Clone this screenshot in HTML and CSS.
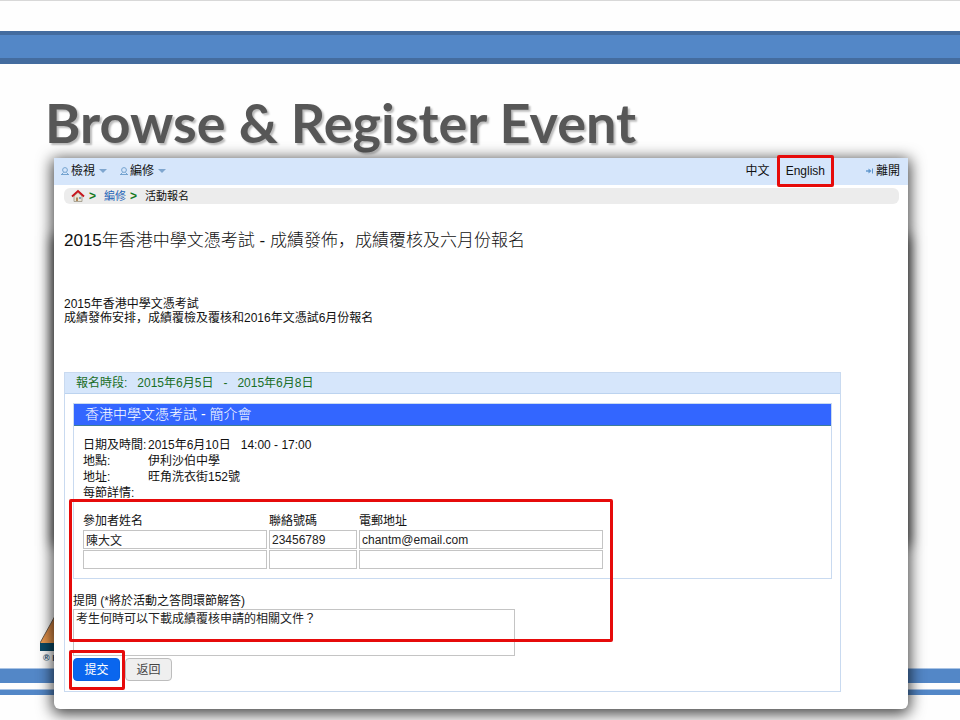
FILE: index.html
```html
<!DOCTYPE html>
<html lang="en">
<head>
    <meta charset="UTF-8">
    <meta name="viewport" content="width=device-width, initial-scale=1.0">
    <title>Browse &amp; Register Event</title>
    <link rel="stylesheet" href="styles.css">
</head>
<body>
    <div class="top-band"></div>
    <h1>Browse &amp; Register Event</h1>

    <div class="stage">
        <div class="slide-footer">
            <div class="logo">
                <svg width="60" height="36" viewBox="0 0 60 36" aria-hidden="true">
                    <defs>
                        <linearGradient id="sail" x1="0" y1="0" x2="0" y2="1">
                            <stop offset="0" stop-color="#c9783c"/>
                            <stop offset="1" stop-color="#f09c50"/>
                        </linearGradient>
                    </defs>
                    <path d="M0 27 L15 0 L45 0 L60 27 Z" fill="url(#sail)"/>
                    <path d="M0 27 L15 0" stroke="#6b5a4a" stroke-width="1"/>
                    <rect x="0" y="27" width="60" height="8" fill="#0c4a66"/>
                </svg>
                <span>® H</span>
            </div>
            <div class="band-thick"></div>
            <div class="band-thin"></div>
        </div>

        <div class="window">
            <nav class="toolbar">
                <a href="#">
                    <svg class="user" width="10" height="10" viewBox="0 0 10 10" aria-hidden="true"><circle cx="5" cy="4" r="2.4"/><path d="M1 8.5h8M2 8l1.600-1.600M8 8L6.400 6.400"/></svg>檢視<span class="caret"></span>
                </a>
                <a href="#">
                    <svg class="user" width="10" height="10" viewBox="0 0 10 10" aria-hidden="true"><circle cx="5" cy="4" r="2.4"/><path d="M1 8.5h8M2 8l1.600-1.600M8 8L6.400 6.400"/></svg>編修<span class="caret"></span>
                </a>
                <a href="#" class="lang-zh">中文</a>
                <a href="#" class="lang-en">English</a>
                <a href="#" class="leave">
                    <svg width="10" height="10" viewBox="0 0 10 10" aria-hidden="true"><path d="M1 5h3" fill="none" stroke="#5f96cc" stroke-width="1.400"/><path d="M3.500 2.500L6.500 5l-3 2.500z" fill="#5f96cc"/><path d="M7.500 2.500v5" stroke="#5f96cc"/></svg>離開
                </a>
            </nav>

            <div class="breadcrumb">
                <a href="#" aria-label="Home">
                    <svg width="14" height="14" viewBox="0 0 14 14" aria-hidden="true">
                        <path d="M3 7v5.500h8V7L7 3.500z" fill="#e9e4d6" stroke="#9b9484" stroke-width=".8"/>
                        <path d="M5 12V8.500h2V12z" fill="#b08a5c"/>
                        <path d="M8 8h2v2H8z" fill="#7fa3bd"/>
                        <path d="M1 7.500L7 2l6 5.500" fill="none" stroke="#c8141c" stroke-width="1.800"/>
                    </svg>
                </a>
                <b>&gt;</b>
                <a href="#">編修</a>
                <b>&gt;</b>
                <span>活動報名</span>
            </div>

            <h2>2015年香港中學文憑考試 - 成績發佈，成績覆核及六月份報名</h2>
            <p class="intro">2015年香港中學文憑考試<br>成績發佈安排，成績覆檢及覆核和2016年文憑試6月份報名</p>

            <form class="panel">
                <div class="period">
                    <span>報名時段:</span>
                    <span>2015年6月5日</span>
                    <span>-</span>
                    <span>2015年6月8日</span>
                </div>

                <section class="event">
                    <h3>香港中學文憑考試 - 簡介會</h3>
                    <dl>
                        <dt>日期及時間:</dt><dd>2015年6月10日 &nbsp; 14:00 - 17:00</dd>
                        <dt>地點:</dt><dd>伊利沙伯中學</dd>
                        <dt>地址:</dt><dd>旺角洗衣街152號</dd>
                        <dt>每節詳情:</dt><dd></dd>
                    </dl>
                    <table>
                        <thead>
                            <tr>
                                <th id="col-name" class="col-name">參加者姓名</th>
                                <th id="col-phone" class="col-phone">聯絡號碼</th>
                                <th id="col-email" class="col-email">電郵地址</th>
                            </tr>
                        </thead>
                        <tbody>
                            <tr>
                                <td><input type="text" aria-labelledby="col-name" value="陳大文"></td>
                                <td><input type="text" aria-labelledby="col-phone" value="23456789"></td>
                                <td><input type="text" aria-labelledby="col-email" value="chantm@email.com"></td>
                            </tr>
                            <tr>
                                <td><input type="text" aria-labelledby="col-name"></td>
                                <td><input type="text" aria-labelledby="col-phone"></td>
                                <td><input type="text" aria-labelledby="col-email"></td>
                            </tr>
                        </tbody>
                    </table>
                </section>

                <div class="question">
                    <label for="question">提問 (*將於活動之答問環節解答)</label>
                    <textarea id="question" lang="zh-Hant">考生何時可以下載成績覆核申請的相關文件？</textarea>
                </div>

                <div class="actions">
                    <button type="submit" class="primary">提交</button>
                    <button type="button">返回</button>
                </div>

                <div class="mark mark-form"></div>
            </form>
        </div>
    </div>
</body>
</html>
```
FILE: styles.css
```css
* {
    box-sizing: border-box;
}

body {
    margin: 0;
    min-height: 100vh;
    display: flex;
    flex-direction: column;
    overflow: hidden;
    background: #fefefe;
    border-top: 1px solid #d8d8d8;
    color: #111;
    font-family: "Liberation Sans", "Noto Sans CJK SC", sans-serif;
    font-size: 12px;
    line-height: 16px;
}

a {
    color: inherit;
    text-decoration: none;
}

/* Slide */
.top-band {
    height: 33px;
    margin-top: 30px;
    background: #5387c7;
    border-top: 4px solid #446c9f;
    border-bottom: 6px solid #446c9f;
}

h1 {
    margin: 26px 0 2px 45px;
    color: #575757;
    font-family: Lato, sans-serif;
    font-size: 54px;
    font-weight: 700;
    line-height: 66px;
    white-space: nowrap;
    text-shadow: 2px 2px 2px #bbb;
}

/* The window sits on top of the slide footer */
.stage {
    flex: 1;
    display: grid;
    isolation: isolate;
}

.slide-footer,
.window {
    grid-area: 1 / 1;
}

.slide-footer {
    align-self: end;
    padding-bottom: 25px;
}

.logo {
    display: flex;
    flex-direction: column;
    padding-left: 40px;
    color: #1d4f6e;
    font-size: 9px;
    font-weight: 700;
    line-height: 12px;
}

.logo span {
    padding: 0 0 4px 3px;
}

.band-thick,
.band-thin {
    background: #5387c7;
    border-top: 1px solid #a9c3e4;
}

.band-thick {
    height: 15px;
    margin-bottom: 6px;
}

.band-thin {
    height: 6px;
}

/* Window */
.window {
    position: relative;
    margin: 0 52px 11px 54px;
    background: #fff;
    border-radius: 0 0 6px 6px;
    box-shadow: 0 3px 15px 2px rgba(0, 0, 0, 0.75);
}

/* Deeper shadow along the middle of both sides */
.window::before {
    content: "";
    position: absolute;
    inset: 80px 0 165px;
    z-index: -1;
    box-shadow: 0 0 12px 2px rgba(0, 0, 0, 0.6);
}

.toolbar {
    display: flex;
    align-items: center;
    gap: 12px;
    height: 27px;
    padding: 0 8px 1px 6px;
    background: #d6e6fb;
}

.toolbar a {
    display: flex;
    align-items: center;
    gap: 1px;
}

.user {
    fill: none;
    stroke: #74a3d0;
}

.caret {
    margin-left: 3px;
    border: 4px solid transparent;
    border-top-color: #7fa6cf;
    border-bottom: 0;
}

.toolbar .lang-zh {
    margin-left: auto;
}

/* Red call-out boxes */
.lang-en,
.primary {
    position: relative;
}

.toolbar .lang-en {
    margin: 0 28px 0 4px;
}

.lang-en::after,
.primary::after,
.mark {
    content: "";
    position: absolute;
    border: 3px solid #e60b0b;
    border-radius: 2px;
    pointer-events: none;
}

.lang-en::after {
    inset: -8px -9px;
}

.primary::after {
    inset: -9px -6px -10px -5px;
}

.mark-form {
    top: 126px;
    left: 4px;
    width: 544px;
    height: 143px;
}

.breadcrumb {
    display: flex;
    align-items: center;
    gap: 8px;
    height: 16px;
    margin: 3px 9px 0 10px;
    padding-left: 7px;
    background: #ececec;
    border-radius: 6px;
    font-size: 11px;
}

.breadcrumb a {
    display: flex;
    color: #1f66b8;
}

.breadcrumb b {
    margin-left: -4px;
    color: #147a1e;
    font-size: 12px;
}

h2 {
    margin: 24px 10px 0;
    font-size: 17px;
    font-weight: 300;
    line-height: 26px;
}

.intro {
    margin: 43px 10px 47px;
    line-height: 14px;
}

/* Registration form */
.panel {
    position: relative;
    width: 91%;
    margin: 0 10px 17px;
    padding-bottom: 10px;
    border: 1px solid #c9daf0;
}

.period {
    display: flex;
    gap: 10px;
    padding: 2px 11px;
    background: #d6e6fb;
    border-bottom: 1px solid #bcd3ef;
    color: #1a6e26;
}

.event {
    margin: 9px 8px 14px;
    padding-bottom: 8px;
    border: 1px solid #c9daf0;
}

h3 {
    margin: 0;
    padding: 0 11px 1px;
    background: #3366ff;
    border-bottom: 1px solid #3d7d99;
    color: #fff;
    font-size: 14px;
    font-weight: 300;
    line-height: 20px;
}

dl {
    display: grid;
    grid-template-columns: 65px 1fr;
    margin: 11px 9px;
}

dt,
dd {
    margin: 0;
    min-height: 16px;
    white-space: nowrap;
}

table {
    margin-left: 7px;
    border-spacing: 2px 1px;
    table-layout: fixed;
    width: 524px;
}

th,
td {
    padding: 0;
    text-align: left;
    font-weight: 400;
}

.col-name {
    width: 184px;
}

.col-phone {
    width: 88px;
}

input,
textarea {
    display: block;
    width: 100%;
    border: 1px solid #c4c4c4;
    border-radius: 0;
    background: #fff;
    color: #222;
    font: inherit;
}

input {
    height: 19px;
    padding: 0 2px;
}

.question {
    padding: 0 8px;
}

.question label {
    display: block;
}

textarea {
    width: 442px;
    height: 47px;
    padding: 1px 2px;
    resize: none;
}

.actions {
    display: flex;
    gap: 5px;
    padding: 2px 8px 0;
}

button {
    width: 47px;
    height: 23px;
    padding: 0;
    border: 1px solid #bdbdbd;
    border-radius: 4px;
    background: #efefef;
    color: #444;
    font: inherit;
}

button.primary {
    border-color: #0a62e0;
    background: #0a66ee;
    color: #fff;
}
```
